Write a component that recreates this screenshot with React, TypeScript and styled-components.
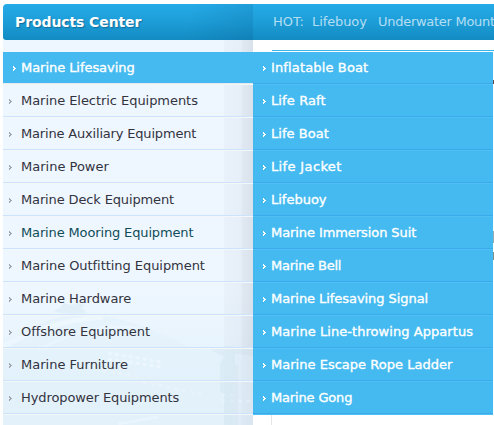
import React from 'react';
import styled, { createGlobalStyle } from 'styled-components';

const GlobalStyle = createGlobalStyle`
  * { box-sizing: border-box; }
  body { margin: 0; background: #fff; overflow: hidden; font: 13px/31px Verdana, "DejaVu Sans", sans-serif; }
`;

const Page = styled.div`
  width: 494px;
  height: 425px;
  padding: 4px 0 0 3px;
  overflow: hidden;
  white-space: nowrap;
`;

const Header = styled.header`
  display: flex;
  height: 36px;
  line-height: 36px;
  border-radius: 4px 0 0 3px;
  overflow: hidden;
  background: linear-gradient(#25abe8, #1d9dd7 50%, #138bc2);
`;

const Title = styled.h1`
  flex: none;
  width: 250px;
  margin: 0;
  padding-left: 12px;
  font-size: 14px;
  letter-spacing: -0.1px;
  color: #fff;
  text-shadow: 1px 1px 1px #136d9c;
  background: linear-gradient(100deg, transparent 185px, rgba(0, 70, 120, 0.16) 255px);
`;

const HotLinks = styled.nav`
  display: flex;
  padding-left: 20px;
  color: #b4def3;
`;

const Hot = styled.span<{ $width: number; $spacing?: number }>`
  flex: none;
  width: ${(p) => p.$width}px;
  letter-spacing: ${(p) => p.$spacing ?? 0}px;
`;

const Body = styled.div`
  display: flex;
  height: 385px;
`;

const Sidebar = styled.aside`
  position: relative;
  width: 250px;
  padding-top: 12px;
  background:
    linear-gradient(90deg, transparent 221px, rgba(215, 222, 234, 0.22) 221px, rgba(212, 220, 232, 0.3) 238px, rgba(200, 208, 220, 0.36) 239px, rgba(198, 206, 218, 0.52) 250px),
    linear-gradient(#eef7ff 250px, #e4f2fc 340px);
`;

const Backdrop = styled.svg`
  position: absolute;
  left: 0;
  bottom: 0;
  width: 250px;
  height: 135px;
`;

const List = styled.ul`
  position: relative;
  margin: 0;
  padding: 0;
  list-style: none;
`;

type Tone = 'plain' | 'active' | 'visited' | 'sub';

const Item = styled.li<{ $tone: Tone }>`
  display: flex;
  align-items: center;
  height: 33px;
  padding-bottom: 1px;
  padding-left: ${(p) => ({ plain: 6, visited: 6, active: 10, sub: 10 })[p.$tone]}px;
  color: ${(p) => ({ plain: '#333340', active: '#fff', visited: '#104c58', sub: '#fff' })[p.$tone]};
  background: ${(p) => ({ plain: 'none', visited: 'none', active: '#44baf0', sub: '#44baf0' })[p.$tone]};
  border-bottom: 1px solid ${(p) => (p.$tone === 'sub' ? '#50c0f3' : '#f4f7f8')};
  box-shadow: inset 0 -1px ${(p) => ({ sub: '#3baaec', active: '#e3eaf0', plain: '#cce3fb', visited: '#cce3fb' })[p.$tone]};
`;

const Arrow = styled.svg<{ $gap: number }>`
  flex: none;
  width: 3px;
  height: 5px;
  margin-right: ${(p) => p.$gap}px;
  position: relative;
  top: 1px;
`;

const Label = styled.span<{ $spacing: number; $strong: boolean }>`
  letter-spacing: ${(p) => p.$spacing}px;
  -webkit-text-stroke: ${(p) => (p.$strong ? '0.35px currentColor' : '0')};
`;

const Content = styled.main`
  position: relative;
  width: 241px;
  padding-top: 10px;
`;

const Rule = styled.div`
  height: 2px;
  margin-left: 19px;
  border-top: 1px solid #39b5e9;
`;

const Submenu = styled(List)`
  width: 240px;
`;

const Below = styled.div`
  height: 12px;
  margin-left: 18px;
  border-left: 1px solid #e5e5e5;
`;

const Sliver = styled.i<{ $top: number; $height: number; $color: string }>`
  position: absolute;
  right: 0;
  top: ${(p) => p.$top}px;
  width: 1px;
  height: ${(p) => p.$height}px;
  background: ${(p) => p.$color};
`;

const categories: [string, number][] = [
  ['Marine Lifesaving', -0.05],
  ['Marine Electric Equipments', -0.05],
  ['Marine Auxiliary Equipment', -0.18],
  ['Marine Power', 0],
  ['Marine Deck Equipment', -0.14],
  ['Marine Mooring Equipment', -0.14],
  ['Marine Outfitting Equipment', -0.05],
  ['Marine Hardware', -0.07],
  ['Offshore Equipment', -0.06],
  ['Marine Furniture', 0],
  ['Hydropower Equipments', -0.1],
];

const products: [string, number][] = [
  ['Inflatable Boat', 0.14],
  ['Life Raft', 0.12],
  ['Life Boat', 0.04],
  ['Life Jacket', 0.36],
  ['Lifebuoy', 0],
  ['Marine Immersion Suit', -0.08],
  ['Marine Bell', -0.22],
  ['Marine Lifesaving Signal', -0.06],
  ['Marine Line-throwing Appartus', 0.06],
  ['Marine Escape Rope Ladder', 0.02],
  ['Marine Gong', -0.16],
];

function Chevron({ color, gap }: { color: string; gap: number }) {
  return (
    <Arrow $gap={gap} viewBox="0 0 3 5" shapeRendering="crispEdges">
      <path d="M0 0h1v1h1v1h1v1h-1v1h-1v1h-1v-2h1v-1h-1z" fill={color} />
    </Arrow>
  );
}

export default function App() {
  return (
    <Page>
      <GlobalStyle />
      <Header>
        <Title>Products Center</Title>
        <HotLinks>
          <Hot $width={39}>HOT:</Hot>
          <Hot $width={66} $spacing={-0.1}>Lifebuoy</Hot>
          <Hot $width={140} $spacing={-0.28}>Underwater Mount</Hot>
        </HotLinks>
      </Header>
      <Body>
        <Sidebar>
          <Backdrop viewBox="0 0 250 135">
            <path d="M0 58Q35 26 82 23Q135 29 185 57L250 66V135H0z" fill="#e1f0fb" opacity=".4" />
            <path d="M50 21l7-3 4-5 8 2 6-2 7 2-4 3 6 5-14 1-13-1z" fill="#e1eff9" />
            <g fill="none" stroke="#f0f8ff">
              <path d="M0 57Q45 31 100 27" strokeWidth="5" opacity=".7" />
              <path d="M35 60Q90 31 135 38" strokeWidth="2" opacity=".55" />
              <path d="M105 63l54 9M105 69l54 8" strokeWidth="3" strokeDasharray="4 3" opacity=".7" />
              <path d="M100 81l38 6M140 92l62 13M219 105h16M219 111h30" strokeWidth="3" strokeDasharray="4 4" opacity=".4" />
              <path d="M115 134l40-7" strokeWidth="3" opacity=".5" />
            </g>
            <path d="M207 59h11l3-3h10l3 3h16v5h-18v11h3v60h-14V104l-4-2V73l4-6z" fill="#d2e4ef" opacity=".42" />
          </Backdrop>
          <List>
            {categories.map(([name, spacing], i) => (
              <Item key={name} $tone={i === 0 ? 'active' : i === 5 ? 'visited' : 'plain'}>
                <Chevron color={i === 0 ? '#fff' : '#a0a5ac'} gap={i === 0 ? 5 : 9} />
                <Label $spacing={spacing} $strong={i === 0}>{name}</Label>
              </Item>
            ))}
          </List>
        </Sidebar>
        <Content>
          <Rule />
          <Submenu>
            {products.map(([name, spacing]) => (
              <Item key={name} $tone="sub">
                <Chevron color="#fff" gap={5} />
                <Label $spacing={spacing} $strong>{name}</Label>
              </Item>
            ))}
          </Submenu>
          <Below />
          <Sliver $top={40} $height={4} $color="#66464b" />
          <Sliver $top={191} $height={12} $color="#9aabb6" />
          <Sliver $top={212} $height={8} $color="#858c92" />
        </Content>
      </Body>
    </Page>
  );
}
